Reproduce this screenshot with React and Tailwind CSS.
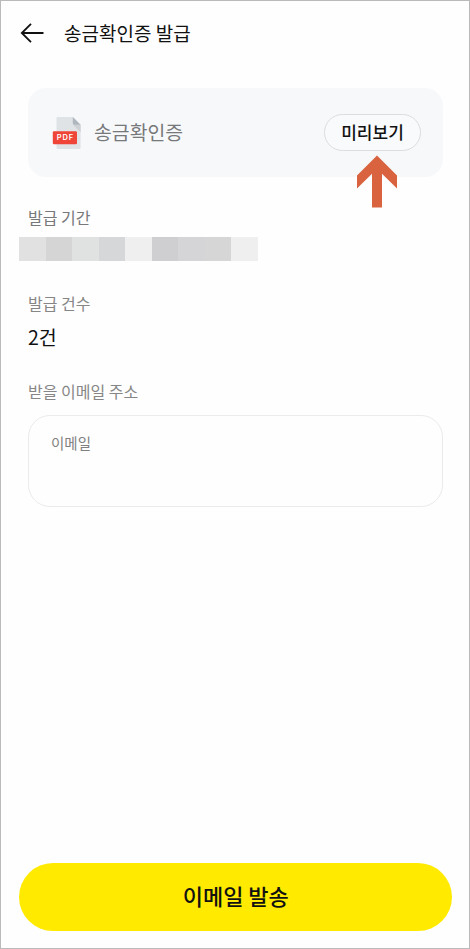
import React, { useState } from 'react';

const MASK_COLORS = [
  '#e1e1e1',
  '#d5d5d6',
  '#e0e1e1',
  '#d6d7d8',
  '#efeff0',
  '#cfcfd1',
  '#d5d5d7',
  '#d6d6d7',
  '#efeff0',
];

function BackIcon() {
  return (
    <svg width="24" height="20" viewBox="0 0 24 20" fill="none" stroke="#111" strokeWidth="1.8">
      <path d="M11 0.8 1.8 10l9.2 9.2M2 10H23.5" />
    </svg>
  );
}

function PdfIcon() {
  return (
    <svg width="30" height="34" viewBox="0 0 30 34">
      <path d="M5 1h16L28.6 8.7V31.5a1.5 1.5 0 0 1-1.5 1.5H6A1.5 1.5 0 0 1 4.5 31.5V1.5Z" fill="#e0e3e6" />
      <path d="M21 8.7H28.6V16.5Z" fill="#cdd1d6" />
      <path d="M20.8 1 28.6 8.7h-6.3A1.5 1.5 0 0 1 20.8 7.2Z" fill="#b0b6bd" />
      <rect x="0.8" y="15.2" width="24.2" height="13" rx="1.2" fill="#ef4438" />
      <text
        x="13"
        y="24.4"
        textAnchor="middle"
        textLength="16.5"
        lengthAdjust="spacing"
        fill="#fff"
        className="font-['Inter',sans-serif] text-[7.5px] font-semibold"
      >
        PDF
      </text>
    </svg>
  );
}

export default function App() {
  const [email, setEmail] = useState('');

  return (
    <div className="flex h-[949px] w-[470px] flex-col border border-[#bababa] bg-[#fefefe] font-['Noto_Sans_CJK_KR',sans-serif] text-[#111]">
      <header className="flex h-[64px] items-center gap-5 pl-[19px]">
        <button type="button" aria-label="뒤로">
          <BackIcon />
        </button>
        <h1 className="text-[19px] leading-7">송금확인증 발급</h1>
      </header>

      <main className="flex flex-1 flex-col pt-[23px] pr-[26px] pl-[27px]">
        {/* Document card */}
        <section className="flex h-[89px] items-center rounded-[18px] bg-[#f7f8fa] pr-[22px] pl-6">
          <PdfIcon />
          <span className="mb-0.5 ml-3 text-[19.4px] leading-7 text-[#77787a]">송금확인증</span>
          <div className="relative ml-auto">
            <button
              type="button"
              className="flex h-[37px] w-[97px] items-center justify-center rounded-full border border-[#dcdde0] bg-[#f9fafb] pb-0.5 text-[17px] leading-6 font-medium"
            >
              미리보기
            </button>
            <svg className="absolute top-[41px] left-[33px]" width="41" height="53" viewBox="0 0 41 53">
              <path d="M20 0.5 40 20.5V33.5L25 18.8V52.5H15V18.8L0 33.5V20.5Z" fill="#d9633f" />
            </svg>
          </div>
        </section>

        <section className="mt-7">
          <h2 className="text-base leading-6 text-[#77787a]">발급 기간</h2>
          <div className="mt-2 -ml-[9px] flex h-6 w-[238.5px]">
            {MASK_COLORS.map((color, i) => (
              <div key={i} className="flex-1" style={{ backgroundColor: color }} />
            ))}
          </div>
        </section>

        <section className="mt-[30px]">
          <h2 className="text-base leading-6 text-[#868686]">발급 건수</h2>
          <p className="mt-2 text-[19.5px] leading-7">2건</p>
        </section>

        <section className="mt-7">
          <h2 className="text-base leading-6 text-[#868686]">받을 이메일 주소</h2>
          <div className="mt-3 flex h-[92px] flex-col rounded-[22px] border border-[#ebebeb] px-[22px] pt-[17px]">
            <label htmlFor="email" className="text-[14.5px] leading-5 text-[#808080]">이메일</label>
            <input
              id="email"
              type="email"
              value={email}
              onChange={(e) => setEmail(e.target.value)}
              className="h-8 w-full bg-transparent text-base outline-none"
            />
          </div>
        </section>
      </main>

      <footer className="pr-[17px] pb-[17px] pl-[17.5px]">
        <button
          type="button"
          className="flex h-[68.5px] w-full items-center justify-center rounded-full bg-[#ffea00] pb-[3px] pl-px text-[22px] leading-8 font-medium"
        >
          이메일 발송
        </button>
      </footer>
    </div>
  );
}
